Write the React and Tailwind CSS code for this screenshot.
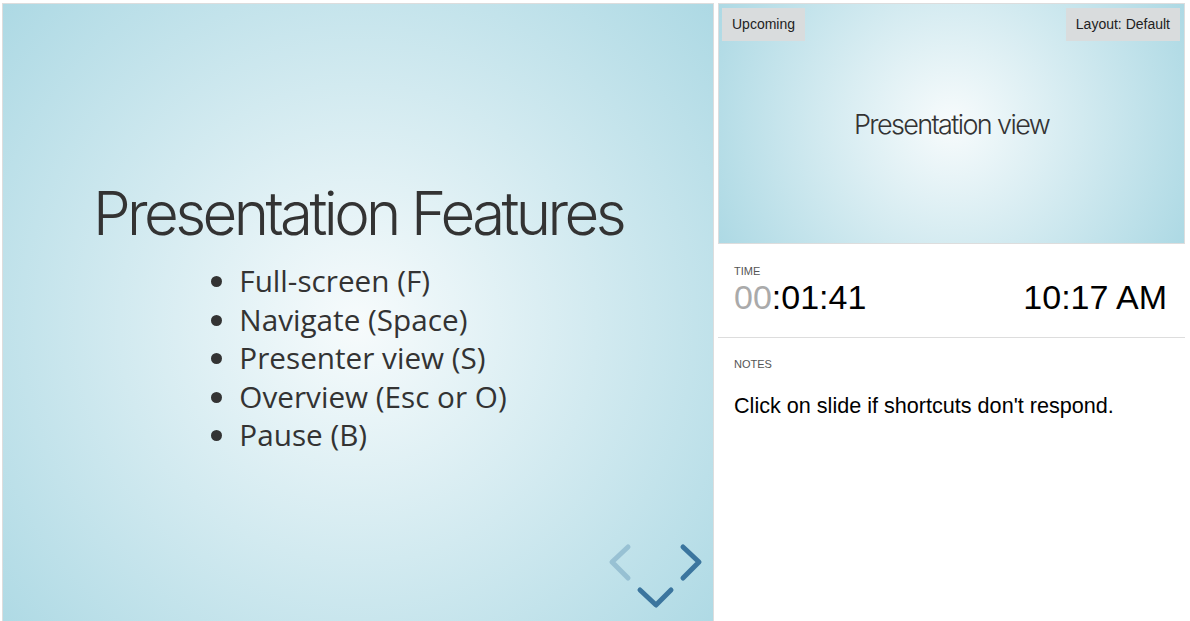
import React from 'react';

const bullets = [
  'Full-screen (F)',
  'Navigate (Space)',
  'Presenter view (S)',
  'Overview (Esc or O)',
  'Pause (B)',
];

const Controls = () => (
  <svg className="absolute left-[597px] top-[532px]" width="110" height="80" viewBox="600 536 110 80" fill="none">
    <polyline points="628,547 612,562 628,578" stroke="#3b759e" strokeOpacity="0.3" strokeWidth="5" strokeLinecap="round" strokeLinejoin="round" />
    <polyline points="683,547 699,562 683,578" stroke="#3b759e" strokeWidth="5" strokeLinecap="round" strokeLinejoin="round" />
    <polyline points="640,590 656,605 671,590" stroke="#3b759e" strokeWidth="5" strokeLinecap="round" strokeLinejoin="round" />
  </svg>
);

const App = () => {
  return (
    <div className="w-[1190px] h-[621px] overflow-hidden bg-white flex pt-[3px] font-['Liberation_Sans',Arial,sans-serif]">

      {/* Current slide */}
      <div className="relative ml-[2px] w-[712px] h-[640px] shrink-0 border border-[#ddd] bg-[radial-gradient(circle,#f7fbfc_0%,#add9e4_100%)]">
        <div className="flex flex-col items-center pt-[173px] text-[#333]">
          <h2 className="font-['Inter',sans-serif] font-light text-[60px] leading-[72px] tracking-[-0.06em]">
            Presentation Features
          </h2>
          <ul className="mt-[13px] ml-[4px] list-disc pl-[26px] font-['Open_Sans',sans-serif] text-[29.7px] leading-[38.6px]">
            {bullets.map((b) => (
              <li key={b}>{b}</li>
            ))}
          </ul>
        </div>
        <Controls />
      </div>

      {/* Right panel */}
      <div className="flex-1 flex flex-col pl-[4px] pr-[5px]">
        <div className="relative h-[241px] border border-[#ddd] bg-[radial-gradient(circle,#f7fbfc_0%,#add9e4_100%)] flex items-center justify-center">
          <div className="absolute left-[3px] top-[4px] h-[33px] px-[10px] flex items-center bg-[#d9dcdd] text-[14px] text-[#222]">
            Upcoming
          </div>
          <div className="absolute right-[4px] top-[4px] h-[33px] px-[10px] flex items-center bg-[#d9dcdd] text-[14px] text-[#222]">
            Layout: Default
          </div>
          <span className="font-['Inter',sans-serif] font-light text-[27px] tracking-[-0.06em] text-[#333] mt-[4px]">
            Presentation view
          </span>
        </div>

        <div className="px-[16px] pt-[21px] pb-[19px] border-b border-[#ddd]">
          <div className="text-[11px] leading-[12px] text-[#555] uppercase">Time</div>
          <div className="flex items-center justify-between text-[34px] leading-[41px] text-black">
            <span><span className="text-[#aaa]">00</span>:01:41</span>
            <span className="mr-[2px]">10:17 AM</span>
          </div>
        </div>

        <div className="px-[16px] pt-[20px]">
          <div className="text-[11px] leading-[12px] text-[#555] uppercase">Notes</div>
          <div className="mt-[23px] text-[21.6px] leading-[26px] text-black">
            Click on slide if shortcuts don't respond.
          </div>
        </div>
      </div>
    </div>
  );
};

export default App;
